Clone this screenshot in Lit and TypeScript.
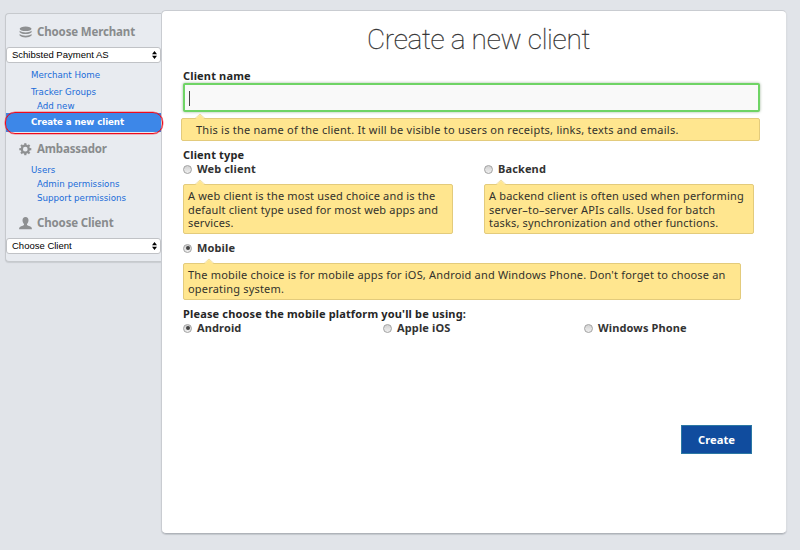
import { LitElement, html, css, svg, TemplateResult } from "lit";

const layersIcon = svg`<ellipse cx="6.6" cy="2.800" rx="5.900" ry="2.300" />
  <path d="M.6 4.700c1.500 1.300 3.600 1.700 6 1.700s4.500-.4 6-1.700v1.500c-1.300 1.200-3.500 1.900-6 1.900S1.900 7.400.6 6.200Z" />
  <path d="M.6 8c1.500 1.300 3.600 1.700 6 1.700s4.500-.4 6-1.700v1.500c-1.300 1.200-3.500 1.900-6 1.900S1.900 10.700.6 9.500Z" />`;
const gearIcon = svg`<g transform="translate(6.300 6.200)">
  <circle r="3.500" fill="none" stroke="#8e9092" stroke-width="2.300" />
  ${[0, 45, 90, 135, 180, 225, 270, 315].map(
    (a) => svg`<rect x="-1.100" y="-6" width="2.200" height="2.400" transform="rotate(${a})" />`
  )}</g>`;
const userIcon = svg`<path d="M6.500 0c2 0 3 1.300 3 3.200 0 1.500-.6 2.900-1.500 3.700v1c.3.500 1.800.9 3.300 1.500 1.200.5 1.600 1.200 1.600 2.800H.1c0-1.600.4-2.300 1.600-2.800C3.200 8.800 4.700 8.400 5 7.900v-1C4.100 6.100 3.500 4.700 3.500 3.200 3.500 1.300 4.500 0 6.500 0Z" />`;

class SideMenu extends LitElement {
  static styles = css`
    :host {
      display: flex;
      flex-direction: column;
      box-sizing: border-box;
      width: 156px;
      height: 249px;
      border: 1px solid #c6c9cd;
      border-right: 0;
      border-radius: 4px 0 0 4px;
      background: #e8ebf0;
      box-shadow: 0 1px 1px #c9ccd1;
      color: #1a6bd8;
      font: 8.700px/14px "DejaVu Sans", sans-serif;
    }
    .heading {
      display: flex;
      align-items: center;
      height: 16px;
      margin-left: 13px;
      color: #898b8d;
      font: bold 11.500px/16px "Noto Sans", sans-serif;
      letter-spacing: -0.15px;
    }
    .heading svg {
      width: 14px;
      height: 13px;
      margin-right: 4px;
      fill: #8e9092;
    }
    .first { margin-top: 10px; }
    .select {
      display: flex;
      align-items: center;
      justify-content: space-between;
      box-sizing: border-box;
      height: 16px;
      border: 1px solid #c0c2c6;
      border-radius: 3px;
      padding: 0 3px 0 5px;
      background: #fff;
      color: #000;
      font: 9.500px/14px "Liberation Sans", sans-serif;
    }
    .select svg { width: 5px; height: 8px; }
    .s1 { margin: 7px 0 5px; }
    .s2 { margin-top: 7px; }
    .link { padding-left: 25px; white-space: nowrap; }
    .sub { padding-left: 31px; }
    .gap { margin-top: 3px; }
    .current {
      position: relative;
      height: 19px;
      box-sizing: border-box;
      padding-left: 25px;
      background: #3d87e8;
      color: #fff;
      font: bold 8.700px/19px "DejaVu Sans", sans-serif;
      letter-spacing: -0.1px;
      margin-bottom: 9px;
    }
    .ring {
      position: absolute;
      inset: -1px -2px -2px -1px;
      border: 1px solid #ee0a1c;
      box-shadow: 0 0 0 0.500px #ee0a1c80;
      border-radius: 10px;
    }
    .users { margin-top: 6px; }
    .last { margin: 10px 0 0 13px; }
  `;
  heading(icon: TemplateResult, text: string, extra = "") {
    return html`<div class="heading ${extra}"><svg viewBox="0 0 14 13">${icon}</svg>${text}</div>`;
  }
  select(text: string, extra: string) {
    return html`<div class="select ${extra}">${text}<svg viewBox="0 0 5 8"><path d="M0 3.200 2.500 0 5 3.200ZM0 4.800h5L2.500 8Z" /></svg></div>`;
  }
  render() {
    return html`
      ${this.heading(layersIcon, "Choose Merchant", "first")}
      ${this.select("Schibsted Payment AS", "s1")}
      <div class="link">Merchant Home</div>
      <div class="link gap">Tracker Groups</div>
      <div class="link sub">Add new</div>
      <div class="current">Create a new client<div class="ring"></div></div>
      ${this.heading(gearIcon, "Ambassador")}
      <div class="link users">Users</div>
      <div class="link sub">Admin permissions</div>
      <div class="link sub">Support permissions</div>
      ${this.heading(userIcon, "Choose Client", "last")}
      ${this.select("Choose Client", "s2")}
    `;
  }
}
customElements.define("side-menu", SideMenu);

class HintBox extends LitElement {
  static styles = css`
    :host {
      display: block;
      position: relative;
      box-sizing: border-box;
      border: 1px solid #e3cb7c;
      border-radius: 2px;
      background: #ffe68f;
      color: #33322c;
      font: 11px/13.500px "Noto Sans", sans-serif;
      letter-spacing: 0.17px;
      white-space: nowrap;
    }
    svg {
      position: absolute;
      left: var(--arrow, 11px);
      top: -5px;
      width: 10px;
      height: 5px;
      overflow: visible;
    }
  `;
  render() {
    return html`<svg viewBox="0 0 10 5"><path d="M0 5.500 5 .5l5 5Z" fill="#ffe68f" /><path d="M0 4.500 5 0l5 4.500" fill="none" stroke="#ecd68c" stroke-width=".8" /></svg><slot></slot>`;
  }
}
customElements.define("hint-box", HintBox);

class RadioOption extends LitElement {
  static properties = { label: {}, checked: { type: Boolean } };
  declare label: string;
  declare checked: boolean;
  static styles = css`
    :host {
      display: flex;
      align-items: center;
      height: 14px;
      color: #333;
      font: bold 11px/14px "Noto Sans", sans-serif;
      letter-spacing: 0.13px;
      white-space: nowrap;
    }
    .dot {
      display: grid;
      place-items: center;
      box-sizing: border-box;
      width: 9px;
      height: 9px;
      margin-right: 5px;
      border: 1px solid #a2a2a2;
      border-radius: 50%;
      background: linear-gradient(#d2d2d2, #efefef);
    }
    .on::after {
      content: "";
      width: 4px;
      height: 4px;
      border-radius: 50%;
      background: #444;
    }
  `;
  render() {
    return html`<span class="dot ${this.checked ? "on" : ""}"></span>${this.label}`;
  }
}
customElements.define("radio-option", RadioOption);

class AppRoot extends LitElement {
  static styles = css`
    :host {
      display: flex;
      box-sizing: border-box;
      width: 800px;
      height: 550px;
      padding: 10px 13px 16px 5px;
      background: #e1e4e9;
      overflow: hidden;
    }
    side-menu { margin-top: 3px; flex: none; position: relative; z-index: 1; }
    .card {
      box-sizing: border-box;
      width: 626px;
      height: 524px;
      border: 1px solid #c9ccd1;
      border-right-color: #dadde1;
      border-bottom-color: #afb3b9;
      border-radius: 5px;
      padding: 0 0 0 21px;
      background: #fff;
      box-shadow: 0 1px 1px #c3c7cc;
      display: flex;
      flex-direction: column;
    }
    h1 {
      margin: 9px 0 0;
      width: 591px;
      height: 40px;
      text-align: center;
      color: #333;
      font: 100 28px/40px Roboto, sans-serif;
      letter-spacing: -0.3px;
      -webkit-text-stroke: 0.300px #333;
    }
    .label {
      height: 14px;
      color: #262626;
      font: bold 11px/14px "Noto Sans", sans-serif;
      letter-spacing: 0.16px;
    }
    .name { margin-top: 9px; }
    .input {
      box-sizing: border-box;
      width: 577px;
      height: 29px;
      flex: none;
      border: 2px solid #6fd465;
      border-radius: 2px;
      box-shadow: 0 0 3px #9fb59c;
      background: #f9f9f9;
      padding: 6px 0 0 4px;
    }
    .caret { width: 1px; height: 15px; background: #444; }
    .wide {
      width: 579px;
      height: 23px;
      margin: 6px 0 7px -2px;
      padding: 4px 0 0 14px;
      letter-spacing: 0.24px;
      --arrow: 13px;
    }
    .pair { display: grid; grid-template-columns: 270px 270px; column-gap: 31px; row-gap: 8px; }
    .pair hint-box { height: 50px; padding: 4px 0 0 4px; }
    .mobile { margin-top: 7px; }
    .note { width: 558px; height: 37px; margin-top: 8px; padding: 4px 0 0 4px; letter-spacing: 0.185px; --arrow: 20px; }
    .platforms { display: grid; grid-template-columns: 200px 201px 150px; }
    .plat { margin-top: 7px; }
    .create {
      box-sizing: border-box;
      width: 71px;
      height: 29px;
      margin: 90px 0 0 498px;
      border: 1px solid #2b78a4;
      background: #104c9e;
      color: #fff;
      text-align: center;
      font: bold 11.200px/28px "Noto Sans", sans-serif;
    }
  `;
  render() {
    return html`
      <side-menu></side-menu>
      <div class="card">
        <h1>Create a new client</h1>
        <div class="label name">Client name</div>
        <div class="input"><div class="caret"></div></div>
        <hint-box class="wide">This is the name of the client. It will be visible to users on receipts, links, texts and emails.</hint-box>
        <div class="label">Client type</div>
        <div class="pair">
          <radio-option label="Web client"></radio-option>
          <radio-option label="Backend"></radio-option>
          <hint-box>A web client is the most used choice and is the<br />default client type used for most web apps and<br />services.</hint-box>
          <hint-box>A backend client is often used when performing<br />server–to–server APIs calls. Used for batch<br />tasks, synchronization and other functions.</hint-box>
        </div>
        <radio-option class="mobile" label="Mobile" checked></radio-option>
        <hint-box class="note">The mobile choice is for mobile apps for iOS, Android and Windows Phone. Don't forget to choose an<br />operating system.</hint-box>
        <div class="label plat">Please choose the mobile platform you'll be using:</div>
        <div class="platforms">
          <radio-option label="Android" checked></radio-option>
          <radio-option label="Apple iOS"></radio-option>
          <radio-option label="Windows Phone"></radio-option>
        </div>
        <div class="create">Create</div>
      </div>
    `;
  }
}
customElements.define("app-root", AppRoot);
